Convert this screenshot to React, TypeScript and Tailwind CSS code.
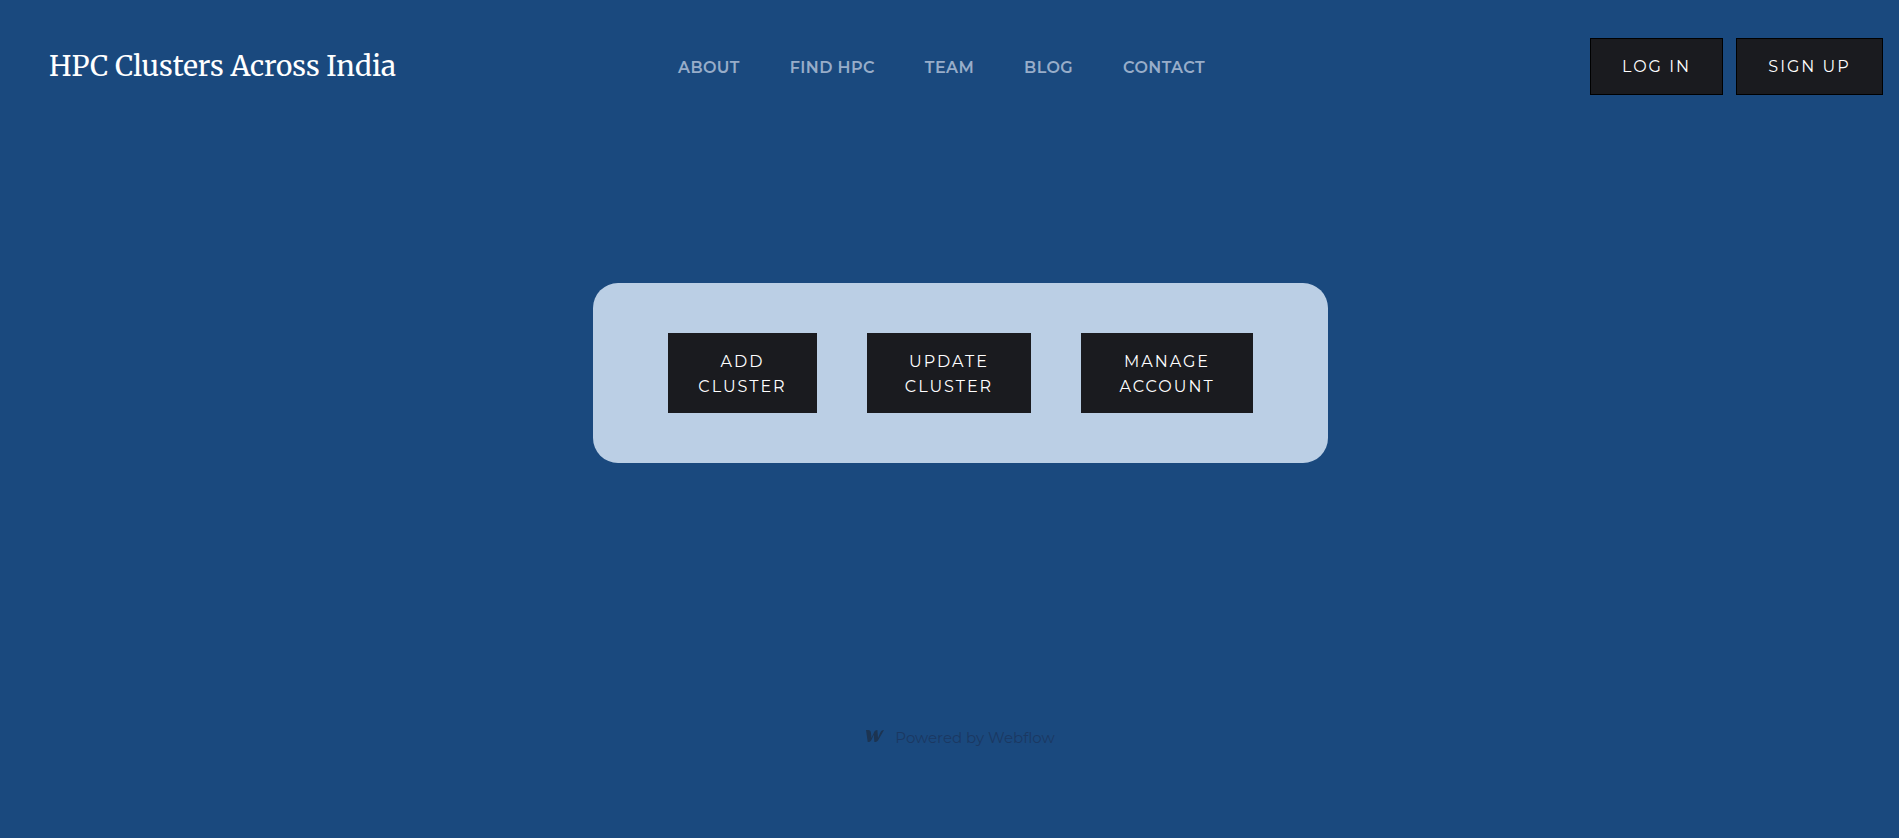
const navLinks = ["About", "Find HPC", "Team", "Blog", "Contact"];

const actions = [
  { lines: ["Add", "Cluster"], width: "w-[149px]" },
  { lines: ["Update", "Cluster"], width: "w-[164px]" },
  { lines: ["Manage", "Account"], width: "w-[172px]" },
];

function WebflowMark() {
  return (
    <svg viewBox="0 0 24 16" className="h-[12px] w-[18px]" fill="currentColor" aria-hidden="true">
      <path d="M24 0C21.300 0 19.700 1.600 18.900 3.600L16 10.600 15.200 0C12.500 0 11.300 1.600 10.600 3.200L7.300 10.600 6.500 3C6.200 1 4.600 0 3 0H0L2.300 16C5 16 6.600 14.700 7.400 12.900L10.400 6.300 11.100 16C13.800 16 15.600 14.700 16.600 12.900Z" />
    </svg>
  );
}

export default function App() {
  return (
    <div className="flex min-h-screen flex-col bg-[#1a497e] font-['Montserrat','Inter',sans-serif] text-white">
      <header className="grid grid-cols-[1fr_auto_1fr] items-center pt-[38px] pr-4">
        <a href="#home" className="pb-0.5 pl-[49px] font-['Merriweather','DejaVu_Serif',serif] text-[28px] leading-9">
          HPC Clusters Across India
        </a>
        <nav className="flex gap-[50px] pt-0.5">
          {navLinks.map((label) => (
            <a
              key={label}
              href="#section"
              className="text-base leading-5 font-semibold tracking-wide text-[#98adc9] uppercase"
            >
              {label}
            </a>
          ))}
        </nav>
        <div className="flex justify-end gap-[13px]">
          <button className="h-[57px] w-[133px] border border-black bg-[#1a1b1f] pt-px text-base tracking-[2px] uppercase">
            Log in
          </button>
          <button className="h-[57px] w-[147px] border border-black bg-[#1a1b1f] pt-px text-base tracking-[2px] uppercase">
            Sign up
          </button>
        </div>
      </header>

      <main className="flex justify-center pt-[188px] pl-[22px]">
        <div className="flex gap-[50px] rounded-[25px] bg-[#bbcfe5] px-[75px] py-[50px]">
          {actions.map(({ lines, width }) => (
            <button
              key={lines.join(" ")}
              className={`${width} bg-[#1a1b1f] pt-4 pb-[14px] text-base leading-[25px] tracking-[2px] uppercase`}
            >
              {lines[0]}
              <br />
              {lines[1]}
            </button>
          ))}
        </div>
      </main>

      <footer className="mt-auto flex justify-center pb-[88px] pl-[22px]">
        <a href="#webflow" className="flex items-center gap-[11px] text-[15px] leading-6 text-[#1a3862]">
          <span className="pb-1 text-[#1c3452]">
            <WebflowMark />
          </span>
          Powered by Webflow
        </a>
      </footer>
    </div>
  );
}
